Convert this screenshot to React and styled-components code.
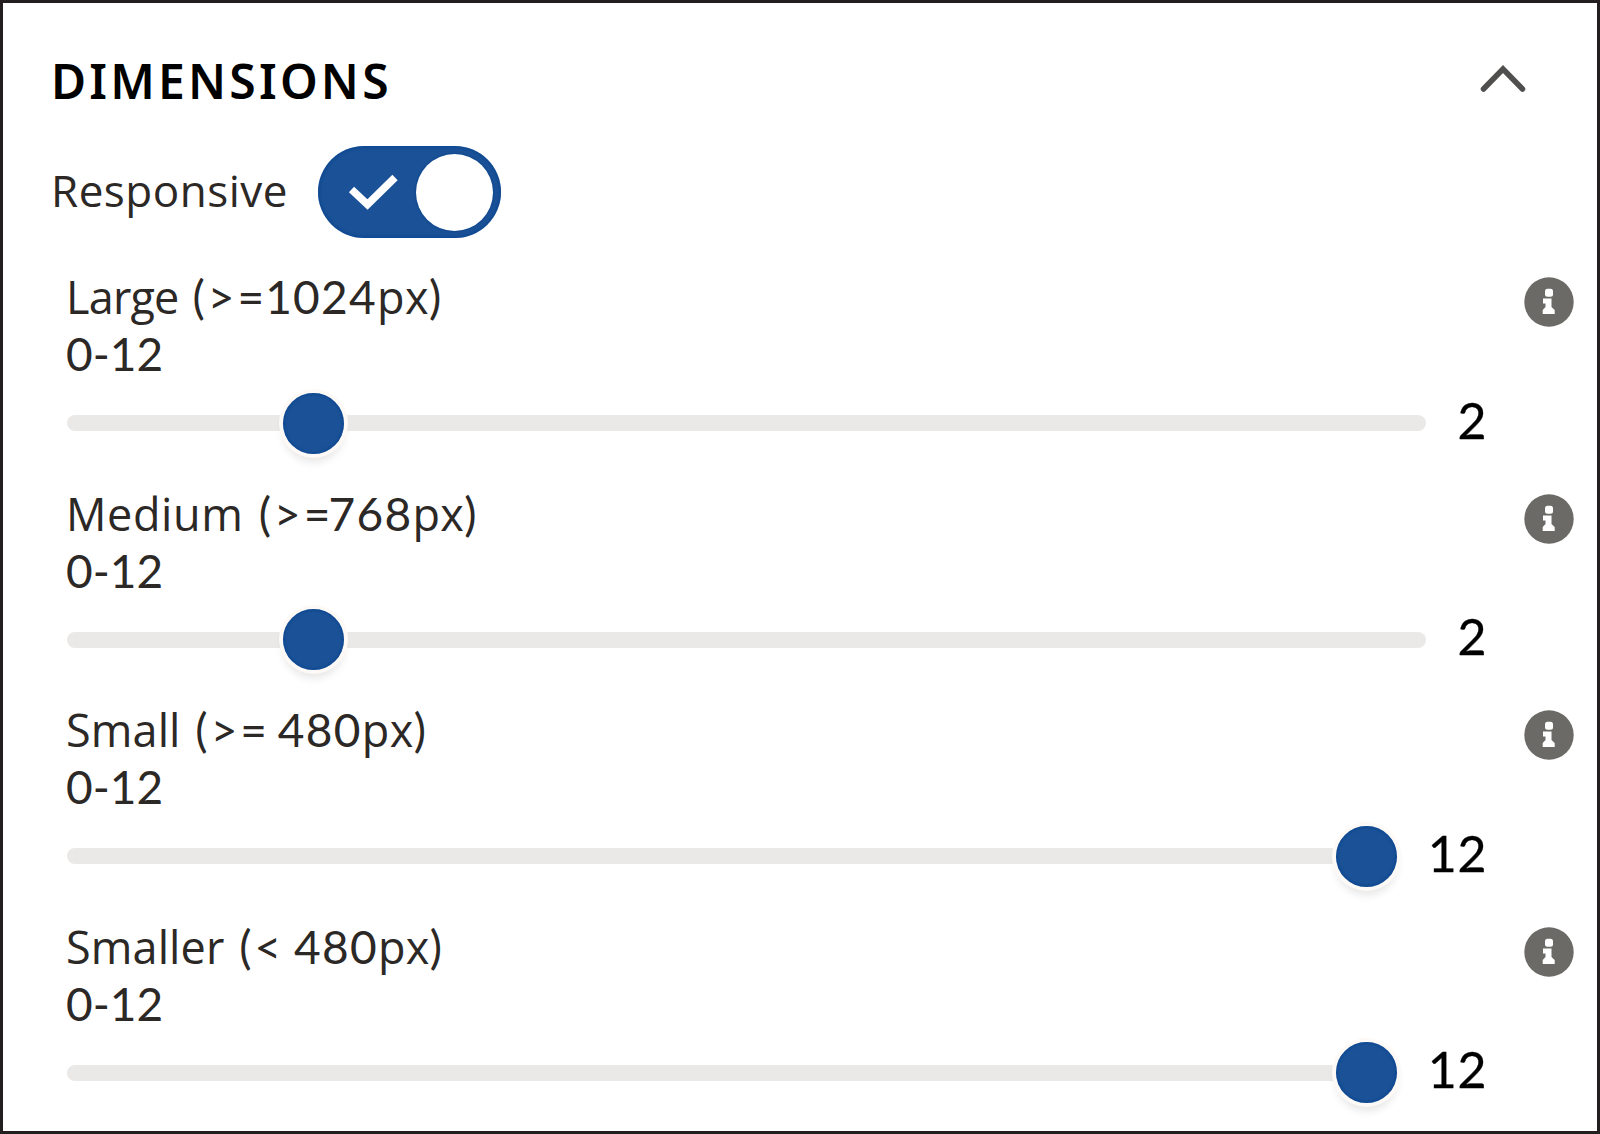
import React from "react";
import { useState } from "react";
import styled, { createGlobalStyle } from "styled-components";

const GlobalStyle = createGlobalStyle`
  * {
    box-sizing: border-box;
  }
  body {
    margin: 0;
    background: #ffffff;
  }
`;

const Panel = styled.section`
  width: 1600px;
  height: 1134px;
  padding: 48px 23px 0 48px;
  border: 3px solid #231f20;
  background: #ffffff;
  color: #2b2826;
  font-family: Lato, "Liberation Sans", sans-serif;
  overflow: hidden;
`;

const Header = styled.header`
  display: flex;
  justify-content: space-between;
  height: 60px;
  padding-right: 46px;
`;

const Title = styled.h2`
  margin: 0;
  color: #000000;
  font-family: "Noto Sans", sans-serif;
  font-size: 48px;
  font-weight: 600;
  line-height: 60px;
  letter-spacing: 3.2px;
`;

const CollapseButton = styled.button`
  width: 50px;
  height: 58px;
  padding: 0;
  border: none;
  background: transparent;
  cursor: pointer;
`;

const ToggleRow = styled.label`
  display: flex;
  align-items: center;
  justify-content: space-between;
  width: 449.5px;
  height: 92px;
  margin-top: 35px;
  cursor: pointer;
`;

const ToggleLabel = styled.span`
  padding-bottom: 4px;
  font-family: "Open Sans", sans-serif;
  font-size: 44px;
  letter-spacing: 0.5px;
`;

const Switch = styled.span`
  display: flex;
  align-items: center;
  justify-content: space-between;
  width: 183px;
  height: 92px;
  padding: 0 8px 0 30px;
  border-radius: 46px;
  background: #1b5297;
  box-shadow: inset 0 0 5px #003f8c;
`;

const Knob = styled.span`
  width: 77px;
  height: 77px;
  border-radius: 50%;
  background: #ffffff;
  box-shadow: 0 0 3px #003a86;
`;

const Fields = styled.div`
  padding: 30px 0 0 16px;
`;

const Field = styled.div`
  height: 216.5px;
`;

const FieldTop = styled.div`
  display: flex;
  justify-content: space-between;
  height: 114px;
`;

const LabelGroup = styled.div`
  margin-left: -1px;
`;

const Label = styled.div`
  font-size: 46px;
  line-height: 57px;
  white-space: pre;
`;

const Letters = styled.span`
  font-family: "Open Sans", sans-serif;
  font-size: 45px;
  letter-spacing: ${({ $spacing }) => $spacing || 0}px;
`;

const Operator = styled.span`
  margin-left: 3px;
  letter-spacing: 3px;
`;

const Digits = styled.span`
  margin-left: ${({ $kern }) => $kern}px;
  letter-spacing: 1.3px;
`;

const InfoIcon = styled.svg`
  width: 50px;
  height: 50px;
  margin-top: 9px;
`;

const SliderRow = styled.div`
  display: flex;
  align-items: center;
  gap: 31px;
  width: 1420px;
  height: 62px;
  margin-top: 10px;
`;

const Track = styled.div`
  position: relative;
  flex: 1;
  height: 16px;
  border-radius: 8px;
  background: #eae9e8;
`;

const Thumb = styled.span`
  position: absolute;
  top: -22.5px;
  width: 61px;
  height: 61px;
  border-radius: 50%;
  background: #1b5297;
  box-shadow: inset 0 0 4px #003f8c, 0 0 0 4px #fdf9f6, 0 8px 9px rgba(0, 0, 0, 0.1);
`;

const Value = styled.output`
  margin-top: -7px;
  color: #000000;
  font-size: 50px;
  line-height: 60px;
  letter-spacing: 0.6px;
  -webkit-text-stroke: 0.3px #000000;
`;

const MAX = 12;

const fields = [
  { name: "Large", open: "(>=", size: "1024", value: 2, spacing: -0.8, kern: -2 },
  { name: "Medium", open: "(>=", size: "768", value: 2, spacing: 0.6, kern: -5 },
  { name: "Small", open: "(>= ", size: "480", value: 12, spacing: 0.1, kern: -7 },
  { name: "Smaller", open: "(< ", size: "480", value: 12, spacing: 0.1, kern: -5 },
];

const Info = () => (
  <InfoIcon viewBox="0 0 50 50">
    <circle cx="25" cy="25" r="24.7" fill="#6b6a66" />
    <rect x="21" y="11.8" width="8" height="8" rx="2.5" fill="#fff" />
    <path d="M19 21.500h8.500v8.500l3.200 3v4H18.700v-4l2.800-3v-3.500H19z" fill="#fff" />
  </InfoIcon>
);

const SliderField = ({ field }) => (
  <Field>
    <FieldTop>
      <LabelGroup>
        <Label>
          <Letters $spacing={field.spacing}>{field.name} </Letters>
          <Operator>{field.open}</Operator>
          <Digits $kern={field.kern}>{field.size}</Digits>
          <Letters $spacing={0.4}>px</Letters>)
        </Label>
        <Label>0-12</Label>
      </LabelGroup>
      <Info />
    </FieldTop>
    <SliderRow>
      <Track>
        <Thumb style={{ left: `calc((100% - 61px) * ${field.value / MAX})` }} />
      </Track>
      <Value>{field.value}</Value>
    </SliderRow>
  </Field>
);

const App = () => {
  const [open, setOpen] = useState(true);

  return (
    <Panel>
      <GlobalStyle />
      <Header>
        <Title>DIMENSIONS</Title>
        <CollapseButton onClick={() => setOpen(!open)}>
          <svg width="50" height="56" viewBox="0 0 50 56" fill="none">
            <path
              d="M5.5 38L25 18l19.500 20"
              stroke="#514f4d"
              strokeWidth="5.5"
              strokeLinecap="round"
            />
          </svg>
        </CollapseButton>
      </Header>
      {open && (
        <>
          <ToggleRow>
            <ToggleLabel>Responsive</ToggleLabel>
            <Switch>
              <svg width="50" height="38" viewBox="0 0 50 38" fill="none">
                <path d="M3.500 16.500L19.500 31.500L47 4.500" stroke="#fff" strokeWidth="7.5" />
              </svg>
              <Knob />
            </Switch>
          </ToggleRow>
          <Fields>
            {fields.map((field) => (
              <SliderField key={field.name} field={field} />
            ))}
          </Fields>
        </>
      )}
    </Panel>
  );
};

export default App;
